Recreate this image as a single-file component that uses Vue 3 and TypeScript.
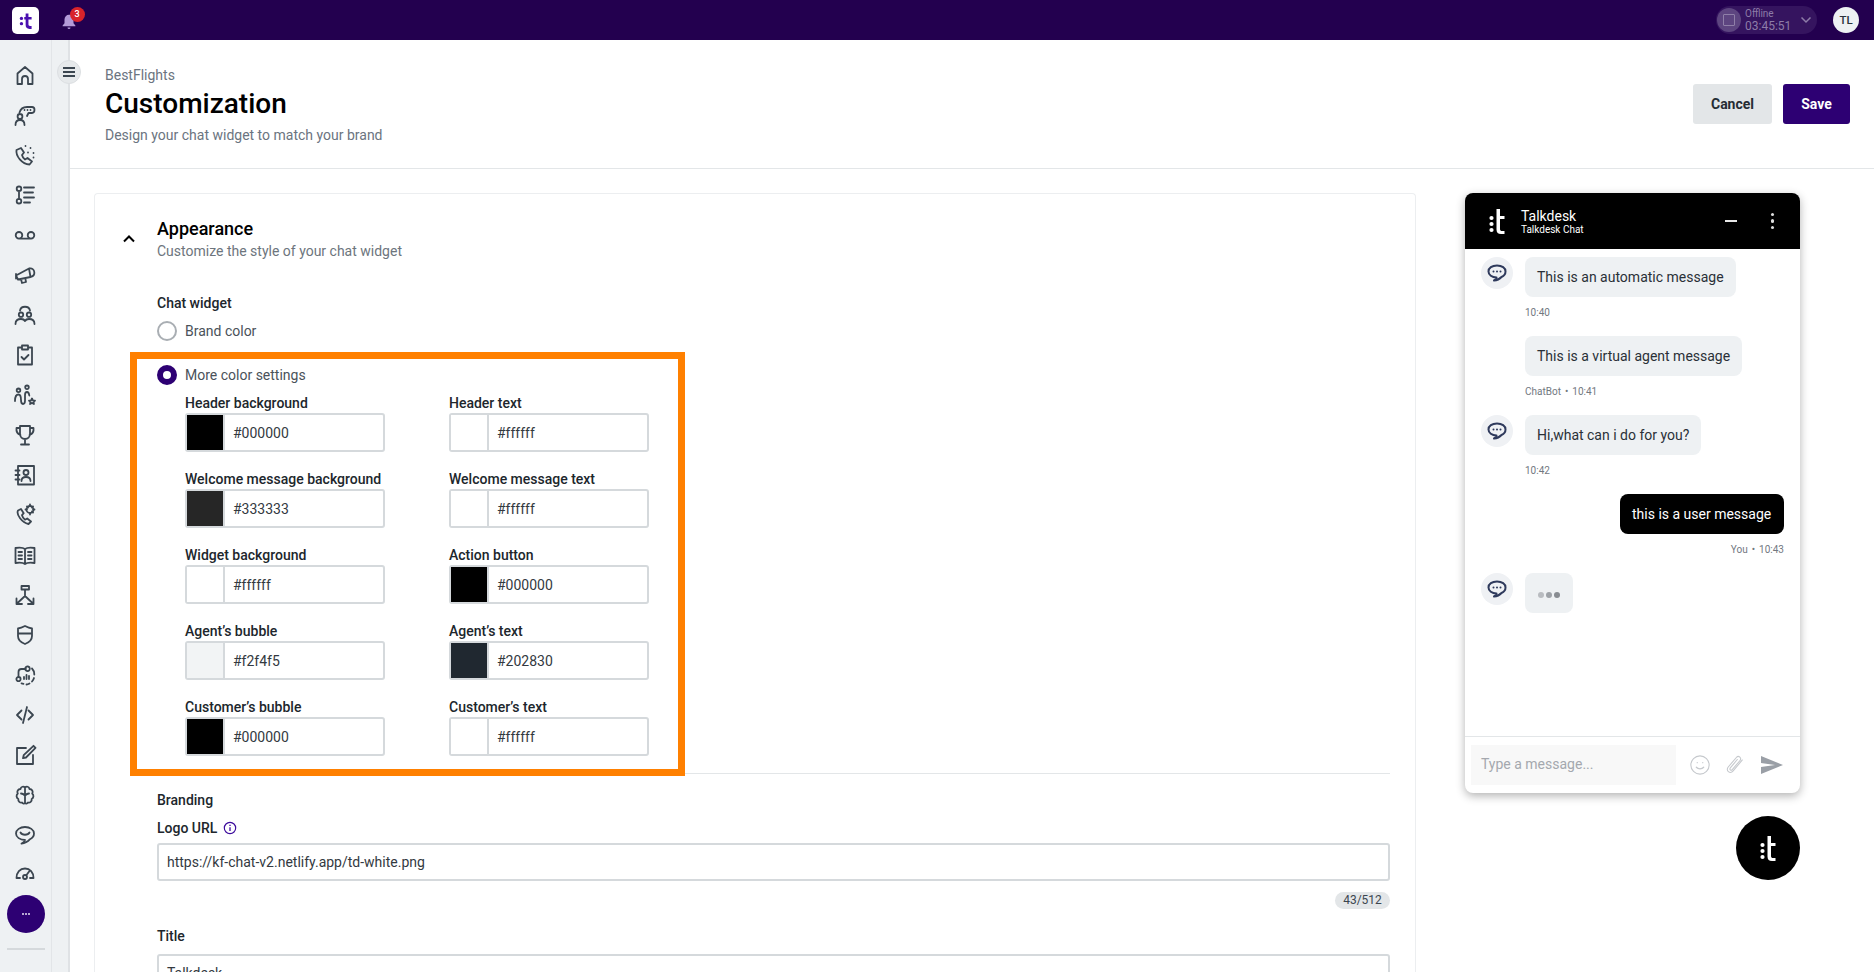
<script setup lang="ts">
const navIcons: string[] = [
  'M4.500 21V10.500L12 4l7.500 6.500V21H15v-5a3 3 0 0 0-6 0v5z',
  'M6.500 9.500C7.500 6 10.500 4 14 4h5c1.700 0 2.500 1.300 2.500 2.800S20.700 10 19 10h-3.500l-1.500 3M11.500 7h.01M14.500 7h.01M17.500 7h.01M7 11a2.400 2.400 0 1 0 0 4.800A2.400 2.400 0 0 0 7 11zM2.500 22c0-3.400 1.800-5 4.500-5s4.500 1.600 4.500 5',
  'M8 5 3.500 7c-1 6 5.500 14 13 14.500l2.500-3-4.500-3.500-2.500 1.500c-1.500-1-2.500-2.500-3-4.500l2-2.500zM12.500 3h.01M17.500 5h.01M20.500 10h.01M20.500 14.500h.01M15 9.500h.01',
  'M6 8v8M6 3.500a2.300 2.300 0 1 0 0 4.600 2.300 2.300 0 0 0 0-4.600zM6 15.900a2.300 2.300 0 1 0 0 4.600 2.300 2.300 0 0 0 0-4.600zM11 4.500h10M11 9.500h9M11 14.500h10M11 19.500h6',
  'M6 9a3.300 3.300 0 1 0 0 6.600A3.300 3.300 0 0 0 6 9zM18 9a3.300 3.300 0 1 0 0 6.600A3.300 3.300 0 0 0 18 9zM6 15.600h12',
  'M3 12.500l13-7 1.500 8.500L5 16.500zM3 11v4.500M16.500 5.500c2.500-.5 4.500 1 4.800 3.500s-1 4.300-3.300 4.800M8 16l1 4 4-1-.7-3.800',
  'M7 7.500c1-5 9-5 10 0M8 9.500a2.200 2.200 0 1 0 0 4.400 2.200 2.200 0 0 0 0-4.400zM16 9.500a2.200 2.200 0 1 0 0 4.400 2.200 2.200 0 0 0 0-4.400zM2.500 21c0-3.500 2.200-5 5.500-5 2 0 3.300.6 4 2 .7-1.400 2-2 4-2 3.300 0 5.500 1.500 5.500 5',
  'M9 4.500H5v17h14v-17h-4M9 2.500h6v4H9zM8.500 14l2.500 2.500 4.500-4.500',
  'M5.500 5.500a1.800 1.800 0 1 0 0 3.600 1.800 1.800 0 0 0 0-3.600zM14 2.500a1.800 1.800 0 1 0 0 3.600 1.800 1.800 0 0 0 0-3.600zM2 18c0-4 1-6.500 3.500-6.500S8 14 8 17s.8 4 2 4 2-1 2-3.500V12c0-2 .7-3 2-3s2 1 2.300 3.500M19 15.500l.9 1.900 2.100.2-1.500 1.400.4 2-1.900-1-1.900 1 .4-2-1.500-1.400 2.100-.2z',
  'M7 3h10v8a5 5 0 0 1-10 0zM7 5H3.500c-.5 4 1 6 4 7M17 5h3.500c.5 4-1 6-4 7M12 16v5M8 21.500h8',
  'M5 3h16v18.500H5zM2.500 7.500h4M2.500 12h4M2.500 16.500h4M13 7a2.500 2.500 0 1 0 0 5 2.500 2.500 0 0 0 0-5zM8.500 18c0-2.500 2-4 4.500-4s4.500 1.500 4.500 4',
  'M8 6 5 7.500c-2 4 4 12 10.500 13.500l2.500-2.500-3.800-3-2.200 1.200c-1.500-1-2.500-2.700-3-4.500l1.700-2zM17 3a3.500 3.500 0 1 0 0 7 3.500 3.500 0 0 0 0-7zM17 1.500V3M17 10v1.500M12.500 6.500H14M20 6.500h1.500M14 3.500l1 1M19 8.500l1 1M20 3.500l-1 1',
  'M12 6C10 4.500 6 4.500 2.500 5v15C6 19.500 10 19.500 12 21c2-1.500 6-1.500 9.500-1V5C18 4.500 14 4.500 12 6zM12 6v15M5.500 9h3.500M5.500 12.500h3.500M5.500 16h3.500M15 9h3.500M15 12.500h3.500M15 16h3.500',
  'M8.500 3h7.500v3.500H8.500zM12 6.500V13M12 13l-7.500 7M12 13l7.500 7M3.500 15.500V21H9M20.500 15.500V21H15',
  'M5 5.500C8 5 10 4 12 3c2 1 4 2 7 2.500V13c0 4-3 6.500-7 8-4-1.500-7-4-7-8zM5 10.500h14',
  'M5.500 13V9c0-2 1.500-3 3-3H13M5.500 14a2 2 0 1 0 0 4.200 2 2 0 0 0 0-4.200zM15 3.500A2.300 2.300 0 1 0 15 8a2.300 2.300 0 0 0 0-4.500zM19 5.500c1.500 1.500 2.300 3.500 2.300 6M21 15c-.5 1.500-1 2.300-2 3.500M16.500 20.500c-1 .6-2 1-3 1M10.500 20.800 8.500 20.300M11 14v2M13.500 12v4M16 13v3',
  'M8.500 7.500 4 12l4.500 4.500M15.500 7.500 20 12l-4.500 4.500M14 4l-4 16',
  'M13 5H4v16h16v-9M20.500 2.800l2 2L13 14.500l-3 .7.7-3z',
  'M12 4.500C10.500 3 8 3.500 7.500 6 5 6 3.500 8.500 4.800 10.500 3 12 3.200 15 5.300 16c-.3 2.500 1.700 4 3.700 3.500 1 1.500 2.200 1.500 3 .5.800 1 2 1 3-.5 2 .5 4-1 3.700-3.500 2.100-1 2.300-4 .5-5.500C20.500 8.500 19 6 16.500 6 16 3.500 13.500 3 12 4.500zM12 4.500V20M8 10.500c1.500 0 2.500.5 4 2M16 10.500c-1.500 0-2.500.5-4 2',
  'M12 4C7 4 3 6.800 3 10.500S7 17 12 17c-.5 1.500-2 2.800-3.500 3.500 3.500-.2 6-1.500 8.500-4.300 2.500-1.200 4-3.300 4-5.700C21 6.800 17 4 12 4zM7.500 9.500c1.500 3 7.500 3 9 0',
  'M3.500 15C3.500 9.500 7 5.500 12 5.500s8.500 4 8.500 9.500h-3.500M3.500 15H7M12 12a2 2 0 1 0 0 4 2 2 0 0 0 0-4zM13.500 12l3-4',
]

interface ColorField {
  label: string
  value: string
}

const colorFields: ColorField[] = [
  { label: 'Header background', value: '#000000' },
  { label: 'Header text', value: '#ffffff' },
  { label: 'Welcome message background', value: '#333333' },
  { label: 'Welcome message text', value: '#ffffff' },
  { label: 'Widget background', value: '#ffffff' },
  { label: 'Action button', value: '#000000' },
  { label: 'Agent’s bubble', value: '#f2f4f5' },
  { label: 'Agent’s text', value: '#202830' },
  { label: 'Customer’s bubble', value: '#000000' },
  { label: 'Customer’s text', value: '#ffffff' },
]

const swatch = (value: string) => ({ background: value === '#333333' ? '#262626' : value })
</script>

<template>
  <div class="app">
    <header class="topbar">
      <div class="applogo">
        <svg viewBox="0 0 20 24" width="14" height="17">
          <circle cx="3.500" cy="9" r="2.400" fill="#4a10b0" />
          <circle cx="3.500" cy="16.500" r="2.400" fill="#4a10b0" />
          <path d="M9.500 2h4v5H18v3.500h-4.500v7c0 1.600.8 2.300 2.300 2.300H18V24h-3c-3.700 0-5.500-1.900-5.500-5.500v-8H7.500V7h2z" fill="#4a10b0" />
        </svg>
      </div>
      <div class="bell">
        <svg viewBox="0 0 24 24" width="18" height="18">
          <path d="M12 3.500c-3.500 0-6 2.800-6 6.500v5l-2.500 3v1h17v-1L18 15v-5c0-3.700-2.500-6.500-6-6.500zM10 20.500a2 2 0 0 0 4 0z" fill="#b39ad8" />
        </svg>
        <span class="badge">3</span>
      </div>
      <div class="topspace"></div>
      <div class="status">
        <span class="status-circle"><span class="status-square"></span></span>
        <span class="status-text">
          <span class="status-top">Offline</span>
          <span class="status-time">03:45:51</span>
        </span>
        <svg class="status-chev" viewBox="0 0 12 8" width="12" height="8">
          <path d="M1.500 1.500 6 6l4.500-4.500" fill="none" stroke="#8d7ca8" stroke-width="1.500" />
        </svg>
      </div>
      <div class="useravatar">TL</div>
    </header>

    <div class="body">
      <nav class="sidebar">
        <div v-for="(d, i) in navIcons" :key="i" class="nav-item">
          <svg viewBox="0 0 24 24" width="24" height="24">
            <path :d="d" fill="none" stroke="#3b4650" stroke-width="1.800" stroke-linecap="round" stroke-linejoin="round" />
          </svg>
        </div>
        <div class="more"><i></i><i></i><i></i></div>
        <div class="nav-sep"></div>
      </nav>
      <div class="strip">
        <button class="toggle" type="button" aria-label="Toggle menu">
          <span></span><span></span><span></span>
        </button>
      </div>

      <main class="main">
        <section class="pagehead">
          <div class="headtext">
            <div class="crumb">BestFlights</div>
            <h1>Customization</h1>
            <div class="headsub">Design your chat widget to match your brand</div>
          </div>
          <div class="actions">
            <button class="btn cancel" type="button">Cancel</button>
            <button class="btn save" type="button">Save</button>
          </div>
        </section>

        <section class="content">
          <div class="card">
            <div class="chevcol">
              <svg viewBox="0 0 14 10" width="14" height="10">
                <path d="M2 7.500 7 2.500l5 5" fill="none" stroke="#000" stroke-width="2" />
              </svg>
            </div>
            <div class="form">
              <h2>Appearance</h2>
              <div class="cardsub">Customize the style of your chat widget</div>
              <div class="flabel chatw">Chat widget</div>
              <div class="radio-row brand">
                <span class="radio"></span>
                <span>Brand color</span>
              </div>
              <div class="orange">
                <div class="radio-row">
                  <span class="radio on"></span>
                  <span>More color settings</span>
                </div>
                <div class="grid">
                  <div v-for="f in colorFields" :key="f.label" class="field">
                    <div class="flabel">{{ f.label }}</div>
                    <div class="colorinput">
                      <span class="swatch" :style="swatch(f.value)"></span>
                      <span class="hex">{{ f.value }}</span>
                    </div>
                  </div>
                </div>
              </div>
              <div class="divider"></div>
              <div class="flabel branding">Branding</div>
              <div class="flabel logourl">
                Logo URL
                <svg viewBox="0 0 16 16" width="14" height="14">
                  <circle cx="8" cy="8" r="6.500" fill="none" stroke="#3c0a9c" stroke-width="1.300" />
                  <path d="M8 7v4.500M8 4.300v1.400" stroke="#3c0a9c" stroke-width="1.500" />
                </svg>
              </div>
              <div class="textinput url">https://kf-chat-v2.netlify.app/td-white.png</div>
              <div class="counter-row"><span class="counter">43/512</span></div>
              <div class="flabel titlelabel">Title</div>
              <div class="textinput titleinput">Talkdesk</div>
            </div>
          </div>

          <aside class="preview">
            <div class="chat">
              <div class="chat-head">
                <svg viewBox="0 0 16 25" width="16" height="25">
                  <circle cx="2.500" cy="9" r="2.100" fill="#fff" />
                  <circle cx="2.500" cy="15" r="2.100" fill="#fff" />
                  <circle cx="2.500" cy="21" r="2.100" fill="#fff" />
                  <path d="M7.500 0H11v7h4.500v3H11v10c0 1.500.8 2 2 2h2.500v3H12c-3 0-4.500-1.500-4.500-4.500z" fill="#fff" />
                </svg>
                <div class="chat-title">
                  <div class="chat-name">Talkdesk</div>
                  <div class="chat-sub">Talkdesk Chat</div>
                </div>
                <span class="chat-min"></span>
                <span class="chat-kebab"><i></i><i></i><i></i></span>
              </div>

              <div class="chat-msgs">
                <div class="msg">
                  <span class="avatar">
                    <svg viewBox="0 0 24 24" width="24" height="24">
                      <path d="M12 4.500c-5 0-8.500 2.500-8.500 6s3.500 6 8 6c-.4 1.300-1.300 2.400-2.500 3 3-.2 5.500-1.300 7.500-3.500 2.400-1 4-3 4-5.500 0-3.500-3.500-6-8.500-6zM8.500 10.500h.01M12 10.500h.01M15.500 10.500h.01" fill="none" stroke="#2f3a5c" stroke-width="2" stroke-linecap="round" stroke-linejoin="round" />
                    </svg>
                  </span>
                  <span class="bubble">This is an automatic message</span>
                </div>
                <div class="meta">10:40</div>
                <div class="msg">
                  <span class="avatar blank"></span>
                  <span class="bubble">This is a virtual agent message</span>
                </div>
                <div class="meta">ChatBot • 10:41</div>
                <div class="msg">
                  <span class="avatar">
                    <svg viewBox="0 0 24 24" width="24" height="24">
                      <path d="M12 4.500c-5 0-8.500 2.500-8.500 6s3.500 6 8 6c-.4 1.300-1.300 2.400-2.500 3 3-.2 5.500-1.300 7.500-3.500 2.400-1 4-3 4-5.500 0-3.500-3.500-6-8.500-6zM8.500 10.500h.01M12 10.500h.01M15.500 10.500h.01" fill="none" stroke="#2f3a5c" stroke-width="2" stroke-linecap="round" stroke-linejoin="round" />
                    </svg>
                  </span>
                  <span class="bubble">Hi,what can i do for you?</span>
                </div>
                <div class="meta">10:42</div>
                <div class="msg mine">
                  <span class="bubble mine-bubble">this is a user message</span>
                </div>
                <div class="meta right">You • 10:43</div>
                <div class="msg">
                  <span class="avatar">
                    <svg viewBox="0 0 24 24" width="24" height="24">
                      <path d="M12 4.500c-5 0-8.500 2.500-8.500 6s3.500 6 8 6c-.4 1.300-1.300 2.400-2.500 3 3-.2 5.500-1.300 7.500-3.500 2.400-1 4-3 4-5.500 0-3.500-3.500-6-8.500-6zM8.500 10.500h.01M12 10.500h.01M15.500 10.500h.01" fill="none" stroke="#2f3a5c" stroke-width="2" stroke-linecap="round" stroke-linejoin="round" />
                    </svg>
                  </span>
                  <span class="bubble typing"><i></i><i></i><i></i></span>
                </div>
              </div>

              <div class="chat-foot">
                <div class="chat-input">Type a message...</div>
                <svg viewBox="0 0 24 24" width="22" height="22">
                  <circle cx="12" cy="12" r="10" fill="none" stroke="#c6c9cd" stroke-width="1.200" />
                  <path d="M8 14.500c2 2.300 6 2.300 8 0M9 9.500h.01M15 9.500h.01" fill="none" stroke="#c6c9cd" stroke-width="1.400" stroke-linecap="round" />
                </svg>
                <svg viewBox="0 0 24 24" width="22" height="22">
                  <path d="M20 6.500 10 18.500c-1.500 1.800-3.700 2-5.200.8s-1.600-3.400-.2-5.100L13.500 3.800c1-1.200 2.700-1.300 3.800-.4s1.200 2.500.2 3.700L9 17c-.6.700-1.500.8-2.100.3s-.6-1.400 0-2.100L14.500 6" fill="none" stroke="#c6c9cd" stroke-width="1.200" stroke-linecap="round" />
                </svg>
                <svg class="send" viewBox="0 0 24 20" width="24" height="20">
                  <path d="M1 1l22 9-22 9v-7l14-2-14-2z" fill="#9a9fa6" />
                </svg>
              </div>
            </div>

            <div class="fab">
              <svg viewBox="0 0 16 25" width="16" height="27">
                <circle cx="2.500" cy="9" r="2.100" fill="#fff" />
                <circle cx="2.500" cy="15" r="2.100" fill="#fff" />
                <circle cx="2.500" cy="21" r="2.100" fill="#fff" />
                <path d="M7.500 0H11v7h4.500v3H11v10c0 1.500.8 2 2 2h2.500v3H12c-3 0-4.500-1.500-4.500-4.500z" fill="#fff" />
              </svg>
            </div>
          </aside>
        </section>
      </main>
    </div>
  </div>
</template>

<style scoped>
.app {
  width: 1874px;
  height: 972px;
  display: flex;
  flex-direction: column;
  overflow: hidden;
  background: #fff;
  font-family: Roboto, "Liberation Sans", sans-serif;
  font-size: 14px;
  color: #20262c;
}
.topbar {
  height: 40px;
  flex: none;
  background: #23004f;
  display: flex;
  align-items: center;
  padding-left: 12px;
  padding-right: 15px;
  box-sizing: border-box;
}
.applogo {
  width: 27px;
  height: 27px;
  background: #fff;
  border-radius: 5px;
  display: flex;
  align-items: center;
  justify-content: center;
}
.bell {
  position: relative;
  margin-left: 19px;
  width: 22px;
  height: 22px;
  margin-top: 1px;
}
.bell svg {
  display: block;
  margin: 2px;
}
.badge {
  position: absolute;
  left: 11.500px;
  top: -3px;
  width: 15px;
  height: 15px;
  border-radius: 50%;
  background: #d8232a;
  color: #fff;
  font-size: 9px;
  font-weight: 500;
  line-height: 15px;
  text-align: center;
}
.topspace { flex: 1; }
.status {
  width: 101px;
  height: 28px;
  border-radius: 14px;
  background: #35145f;
  display: flex;
  align-items: center;
  margin-right: 16px;
}
.status-circle {
  width: 24px;
  height: 24px;
  margin-left: 1px;
  border-radius: 50%;
  background: #5d4580;
  display: flex;
  align-items: center;
  justify-content: center;
}
.status-square {
  width: 10px;
  height: 10px;
  border: 1.500px solid #8f7fa8;
  border-radius: 1px;
}
.status-text {
  display: flex;
  flex-direction: column;
  margin-left: 4px;
  color: #8d7ca8;
  width: 48px;
}
.status-top { font-size: 10px; line-height: 11px; }
.status-time { font-size: 12px; line-height: 14px; }
.status-chev { margin-left: 7px; }
.useravatar {
  width: 26px;
  height: 26px;
  border-radius: 50%;
  background: #eef1f3;
  color: #2b333b;
  font-size: 11.500px;
  font-weight: 500;
  line-height: 26px;
  text-align: center;
}
.body {
  flex: 1;
  display: flex;
  min-height: 0;
  position: relative;
}
.sidebar {
  width: 52px;
  flex: none;
  background: #eef1f3;
  border-right: 1px solid #e2e5e8;
  box-sizing: border-box;
  padding-top: 15px;
  display: flex;
  flex-direction: column;
  align-items: center;
}
.nav-item {
  height: 40px;
  width: 100%;
  display: flex;
  align-items: center;
  justify-content: center;
  flex: none;
}
.nav-item svg { margin-right: 1px; }
.more {
  width: 38px;
  height: 38px;
  flex: none;
  border-radius: 50%;
  background: #2d0073;
  display: flex;
  align-items: center;
  justify-content: center;
  gap: 1px;
}
.more i {
  width: 2px;
  height: 2px;
  border-radius: 50%;
  background: #e6dff2;
}
.nav-sep {
  width: 38px;
  height: 2px;
  flex: none;
  margin-top: 15px;
  background: #d5d9dc;
}
.strip {
  width: 18px;
  flex: none;
  background: #eef1f3;
  border-right: 2px solid #dfe2e5;
  box-sizing: border-box;
  position: relative;
}
.toggle {
  position: absolute;
  left: 5px;
  top: 20px;
  width: 24px;
  height: 24px;
  padding: 0;
  border: 1px solid #dcdfe2;
  border-radius: 50%;
  background: #e6e9eb;
  display: flex;
  flex-direction: column;
  align-items: center;
  justify-content: center;
  gap: 2px;
  box-sizing: border-box;
}
.toggle span {
  width: 12px;
  height: 2px;
  background: #3b4650;
}
.main {
  flex: 1;
  min-width: 0;
  display: flex;
  flex-direction: column;
  overflow: hidden;
}
.pagehead {
  height: 129px;
  flex: none;
  box-sizing: border-box;
  border-bottom: 1px solid #e3e6e8;
  padding: 0 24px 0 35px;
  display: flex;
  align-items: center;
  justify-content: space-between;
}
.headtext { margin-top: 1px; }
.crumb {
  line-height: 20px;
  color: #6b7480;
}
h1 {
  margin: 1px 0 0;
  font-size: 28px;
  line-height: 36px;
  font-weight: 500;
  color: #000;
}
.headsub {
  margin-top: 3px;
  line-height: 20px;
  color: #6b7480;
}
.actions {
  display: flex;
  gap: 11px;
}
.btn {
  height: 40px;
  border: 0;
  border-radius: 3px;
  font-family: inherit;
  font-size: 14px;
  font-weight: 700;
  padding: 0;
}
.cancel {
  width: 79px;
  background: #e3e6e8;
  color: #262d34;
}
.save {
  width: 67px;
  background: #2d0073;
  color: #fff;
}
.content {
  flex: 1;
  min-height: 0;
  display: flex;
  align-items: flex-start;
  padding: 24px 0 0 24px;
  gap: 49px;
}
.card {
  width: 1322px;
  flex: none;
  box-sizing: border-box;
  border: 1px solid #eceef0;
  border-bottom: 0;
  border-radius: 4px 4px 0 0;
  background: #fff;
  display: flex;
  padding: 23px 25px 0 22px;
}
.chevcol {
  width: 24px;
  flex: none;
  margin-right: 16px;
  padding-top: 17px;
  text-align: center;
  line-height: 10px;
}
.form { flex: 1; min-width: 0; }
h2 {
  margin: 0;
  font-size: 18px;
  line-height: 24px;
  font-weight: 500;
  color: #000;
}
.cardsub {
  line-height: 20px;
  color: #6d757d;
}
.flabel {
  line-height: 20px;
  font-weight: 500;
  color: #20262c;
  white-space: nowrap;
}
.chatw { margin-top: 32px; }
.radio-row {
  height: 24px;
  display: flex;
  align-items: center;
  gap: 8px;
  color: #4a525a;
}
.brand { margin-top: 6px; }
.radio {
  width: 20px;
  height: 20px;
  box-sizing: border-box;
  border-radius: 50%;
  border: 2px solid #a9aeb3;
  background: #fff;
}
.radio.on { border: 6px solid #2d0073; }
.orange {
  position: relative;
  z-index: 1;
  margin: 9px 0 0 -27px;
  width: 555px;
  box-sizing: border-box;
  border: 7px solid #ff8000;
  background: #fff;
  padding: 4px 0 13px 20px;
}
.grid {
  margin-top: 6px;
  display: grid;
  grid-template-columns: 200px 200px;
  column-gap: 64px;
  row-gap: 17px;
  padding-left: 28px;
}
.colorinput {
  height: 39px;
  box-sizing: border-box;
  border: 2px solid #d5d9dc;
  border-radius: 3px;
  display: flex;
  align-items: center;
  background: #fff;
}
.swatch {
  width: 36px;
  height: 100%;
  flex: none;
  border-right: 2px solid #d5d9dc;
  box-sizing: content-box;
}
.hex {
  margin-left: 8px;
  color: #33393f;
}
.divider {
  height: 1px;
  margin-top: -3px;
  margin-left: -27px;
  background: #e3e6e8;
}
.branding { margin-top: 16px; }
.logourl {
  margin-top: 8px;
  display: flex;
  align-items: center;
  gap: 6px;
}
.textinput {
  height: 38px;
  box-sizing: border-box;
  border: 2px solid #d5d9dc;
  border-radius: 3px;
  padding-left: 8px;
  line-height: 34px;
  color: #33393f;
}
.url { margin-top: 5px; }
.counter-row {
  margin-top: 11px;
  display: flex;
  justify-content: flex-end;
}
.counter {
  width: 55px;
  height: 17px;
  border-radius: 9px;
  background: #e3e6e8;
  font-size: 12px;
  line-height: 17px;
  text-align: center;
  color: #3b4650;
}
.titlelabel { margin-top: 17px; }
.titleinput { margin-top: 8px; }
.preview {
  width: 335px;
  flex: none;
  display: flex;
  flex-direction: column;
  align-items: flex-end;
}
.chat {
  width: 335px;
  height: 600px;
  border-radius: 8px;
  background: #fff;
  box-shadow: 0 3px 10px rgba(0, 0, 0, .3);
  display: flex;
  flex-direction: column;
  overflow: hidden;
}
.chat-head {
  height: 56px;
  flex: none;
  background: #000;
  color: #fff;
  display: flex;
  align-items: center;
  padding-left: 24px;
}
.chat-title { margin: 3px 0 0 16px; flex: 1; }
.chat-name { font-size: 14px; line-height: 15px; }
.chat-sub { font-size: 10px; line-height: 12px; }
.chat-min {
  width: 12px;
  height: 2px;
  background: #e8e8e8;
  margin-right: 34px;
}
.chat-kebab {
  display: flex;
  flex-direction: column;
  gap: 3px;
  margin-right: 26px;
}
.chat-kebab i {
  width: 3.500px;
  height: 3.500px;
  border-radius: 50%;
  background: #ddd;
}
.chat-msgs {
  flex: 1;
  padding: 8px 16px 0;
}
.msg {
  display: flex;
  gap: 12px;
  align-items: flex-start;
}
.msg.mine { justify-content: flex-end; }
.avatar {
  width: 32px;
  height: 32px;
  flex: none;
  border-radius: 50%;
  background: #eff1f4;
  display: flex;
  align-items: center;
  justify-content: center;
}
.avatar.blank { background: transparent; }
.bubble {
  height: 40px;
  box-sizing: border-box;
  padding: 0 12px;
  border-radius: 8px;
  background: #eef1f3;
  line-height: 40px;
  color: #2a3037;
  white-space: nowrap;
}
.bubble.mine-bubble {
  background: #000;
  color: #fff;
  width: 164px;
}
.bubble.typing {
  width: 48px;
  display: flex;
  align-items: center;
  justify-content: center;
  gap: 2px;
  padding: 3px 0 0;
}
.typing i {
  width: 6px;
  height: 6px;
  border-radius: 50%;
  background: #9ea2a7;
}
.typing i:first-child { background: #b9bcc0; }
.typing i:last-child { background: #888c91; }
.meta {
  margin: 9px 0 16px 44px;
  font-size: 10px;
  line-height: 14px;
  color: #72787f;
  word-spacing: 1.500px;
}
.meta.right { text-align: right; }
.chat-foot {
  height: 57px;
  flex: none;
  box-sizing: border-box;
  border-top: 1px solid #e3e6e8;
  display: flex;
  align-items: center;
  padding: 0 6px;
}
.chat-input {
  width: 205px;
  height: 40px;
  background: #f8f8f8;
  line-height: 38px;
  padding-left: 10px;
  box-sizing: border-box;
  color: #a4a8ae;
  margin-right: 13px;
}
.chat-foot svg { margin-right: 13px; flex: none; }
.chat-foot .send { margin: 0 0 0 1px; }
.fab {
  width: 64px;
  height: 64px;
  margin-top: 23px;
  border-radius: 50%;
  background: #000;
  display: flex;
  align-items: center;
  justify-content: center;
}
</style>
